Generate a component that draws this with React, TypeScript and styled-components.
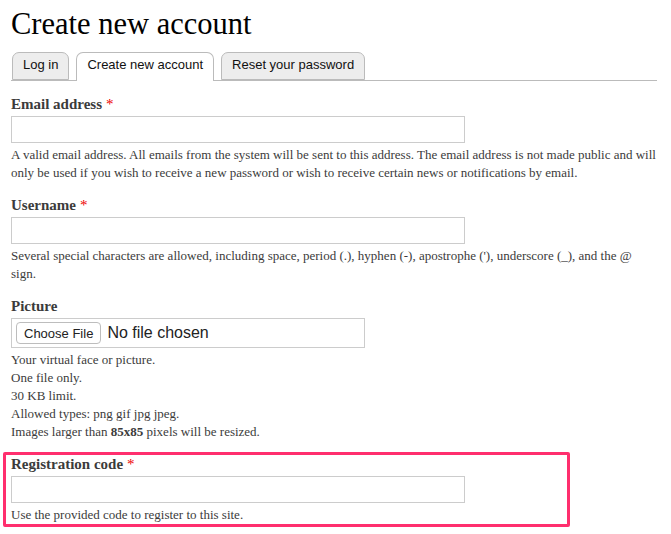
import React from 'react'
import styled, { createGlobalStyle } from 'styled-components'

const GlobalStyle = createGlobalStyle`
  body {
    margin: 0;
    background: #fff;
    font-family: 'Liberation Serif', Georgia, serif;
    color: #3b3b3b;
  }
`

const Page = styled.div`
  padding: 0 14px 0 11px;
  width: 671px;
  box-sizing: border-box;
`

const Title = styled.h1`
  margin: 0;
  padding-top: 6px;
  height: 46px;
  font-family: 'Liberation Serif', Georgia, serif;
  font-weight: normal;
  font-size: 30.5px;
  line-height: 36px;
  color: #000;
`

const Tabs = styled.ul`
  list-style: none;
  margin: 0 0 14px;
  padding: 0 0 0 1px;
  display: flex;
  gap: 7px;
  border-bottom: 1px solid #bbb;
  height: 28px;
  align-items: flex-end;
`

const Tab = styled.li<{ $active?: boolean }>`
  box-sizing: border-box;
  height: ${(p) => (p.$active ? '29px' : '28px')};
  margin-bottom: ${(p) => (p.$active ? '-1px' : '0')};
  padding: 0 10px;
  border: 1px solid #bbb;
  border-bottom: ${(p) => (p.$active ? 'none' : '1px solid #bbb')};
  border-radius: 7px 7px 0 0;
  background: ${(p) => (p.$active ? '#fff' : '#ededed')};
  font-family: 'Liberation Sans', Arial, sans-serif;
  font-size: 13px;
  line-height: 23px;
  color: #111;
`

const Item = styled.div`
  margin-bottom: 14px;
`

const Label = styled.label`
  display: block;
  font-weight: bold;
  font-size: 15px;
  line-height: 18px;
  margin-bottom: 3px;
  color: #3b3b3b;
`

const Required = styled.span`
  color: #e00;
  font-weight: normal;
  margin-left: 4px;
`

const TextInput = styled.input`
  display: block;
  box-sizing: border-box;
  width: 454px;
  height: 27px;
  margin: 0 0 3px;
  border: 1px solid #ccc;
  background: #fff;
  padding: 3px 6px;
  font-size: 13px;
`

const FileBox = styled.div`
  box-sizing: border-box;
  width: 354px;
  height: 30px;
  margin-bottom: 3px;
  border: 1px solid #ccc;
  display: flex;
  align-items: center;
  padding: 0 4px;
  gap: 6px;
`

const ChooseButton = styled.button`
  box-sizing: border-box;
  height: 22px;
  padding: 0 7px;
  border: 1px solid #bdbdbd;
  border-radius: 4px;
  background: #fff;
  font-family: 'Liberation Sans', Arial, sans-serif;
  font-size: 13px;
  color: #222;
`

const NoFile = styled.span`
  font-family: 'Liberation Sans', Arial, sans-serif;
  font-size: 16px;
  color: #222;
`

const Description = styled.div`
  font-size: 13px;
  line-height: 18px;
  color: #3b3b3b;
`

const Highlight = styled.div`
  box-sizing: border-box;
  width: 567px;
  margin: -3px 0 0 -8px;
  padding: 0 0 0 5px;
  border: 3px solid #ff2f6e;
  border-radius: 2px;
`

export default function App() {
  return (
    <Page>
      <GlobalStyle />
      <Title>Create new account</Title>
      <Tabs>
        <Tab>Log in</Tab>
        <Tab $active>Create new account</Tab>
        <Tab>Reset your password</Tab>
      </Tabs>

      <Item>
        <Label>
          Email address<Required>*</Required>
        </Label>
        <TextInput type="text" />
        <Description>
          A valid email address. All emails from the system will be sent to this address. The email address is not
          made public and will only be used if you wish to receive a new password or wish to receive certain news or
          notifications by email.
        </Description>
      </Item>

      <Item>
        <Label>
          Username<Required>*</Required>
        </Label>
        <TextInput type="text" />
        <Description>
          Several special characters are allowed, including space, period (.), hyphen (-), apostrophe ('), underscore
          (_), and the @ sign.
        </Description>
      </Item>

      <Item>
        <Label>Picture</Label>
        <FileBox>
          <ChooseButton type="button">Choose File</ChooseButton>
          <NoFile>No file chosen</NoFile>
        </FileBox>
        <Description>
          Your virtual face or picture.
          <br />
          One file only.
          <br />
          30 KB limit.
          <br />
          Allowed types: png gif jpg jpeg.
          <br />
          Images larger than <strong>85x85</strong> pixels will be resized.
        </Description>
      </Item>

      <Highlight>
        <Label>
          Registration code<Required>*</Required>
        </Label>
        <TextInput type="text" />
        <Description>Use the provided code to register to this site.</Description>
      </Highlight>
    </Page>
  )
}
